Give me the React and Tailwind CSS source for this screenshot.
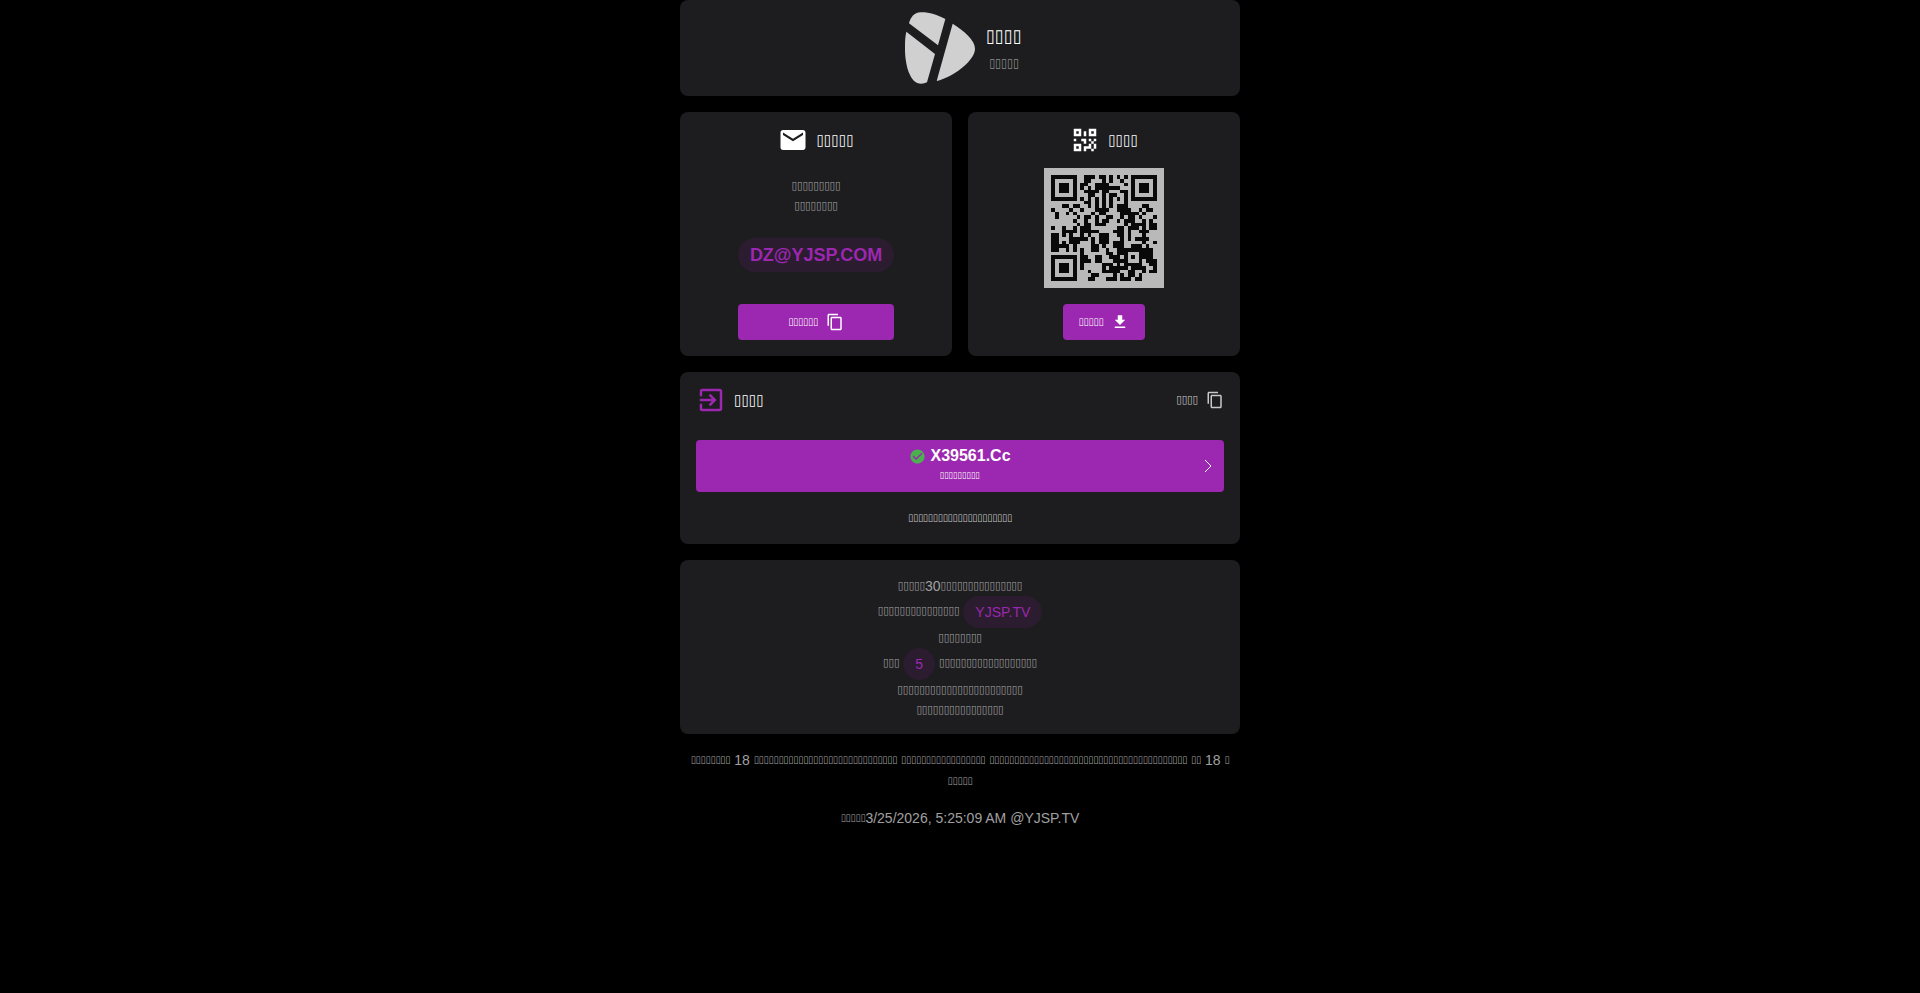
import React from 'react';
import { MdEmail, MdContentCopy, MdFileDownload, MdExitToApp, MdCheckCircle } from 'react-icons/md';

const boxSizes = {
    xs: 'text-[9px]',
    sm: 'text-[10px]',
    md: 'text-[11px]',
    lg: 'text-xs',
    xl: 'text-[15px]',
    title: 'text-lg',
};

// A run of hollow placeholder characters
const Boxes = ({ count, size = 'md' }) => (
    <span className={`align-[2px] font-['DejaVu_Sans_Condensed','DejaVu_Sans',sans-serif] leading-none font-normal ${boxSizes[size]}`}>
        {'▯'.repeat(count)}
    </span>
);

const qrRows = [
    '11111110011101101010101111111',
    '10000010011000101001001000001',
    '10111010110011110000101011101',
    '10111010101011111110001011101',
    '10111010011110110001101011101',
    '10000010001100101100101000001',
    '11111110101010101010101111111',
    '00000000011010101000100000000',
    '00011011001010101011100001100',
    '10000100100011110011110010110',
    '01001010000101100001111101000',
    '01000001011010011001011010001',
    '00000010010010110010111001010',
    '00000001011011100000101111011',
    '10010010111000000011011101011',
    '00011110111110000111010011100',
    '11010100101001110011010001000',
    '11000111110101110001010111100',
    '11010111000101110111000001001',
    '11111010000110100111001110100',
    '11001010100110010011111111110',
    '00000000100000011011100011110',
    '11111110110011001110101011110',
    '10000010111011000111100010111',
    '10111010100000111010111110011',
    '10111010100000101111101111001',
    '10111010001000111110011001011',
    '10000010000110000101011010000',
    '11111110001100011101110110000',
];

const QrCode = () => (
    <svg viewBox="0 0 33 33" className="h-[120px] w-[120px] bg-[#b9b9b9]" shapeRendering="crispEdges" role="img" aria-label="QR">
        {qrRows.map((row, y) =>
            row.split('').map((cell, x) =>
                cell === '1' ? <rect key={`${x}-${y}`} x={x + 2} y={y + 2} width="1" height="1" fill="#090909" /> : null
            )
        )}
    </svg>
);

const QrIcon = ({ className }) => (
    <svg viewBox="0 0 24 24" fill="currentColor" className={className}>
        <path d="M3,11H5V13H3V11M11,5H13V9H11V5M9,11H13V15H11V13H9V11M15,11H17V13H19V11H21V13H19V15H21V19H19V21H17V19H13V21H11V17H15V15H17V13H15V11M19,19V15H17V19H19M15,3H21V9H15V3M17,5V7H19V5H17M3,3H9V9H3V3M5,5V7H7V5H5M3,15H9V21H3V15M5,17V19H7V17H5Z" />
    </svg>
);

const Logo = () => (
    <svg viewBox="24 24 240 240" className="h-20 w-20" fill="#d0d0d0">
        <path d="M57 70C62 52 72 37 92 37C115 36 141 44 166 57L144 136Z" />
        <path d="M49 95L135 162L111 247C101 252 89 252 80 248C57 235 44 190 45 140C45 120 46 108 49 95Z" />
        <path d="M188 71C222 92 255 120 255 146C255 178 200 226 140 243Z" />
    </svg>
);

const Chip = ({ children }) => (
    <span className="inline-flex h-8 items-center rounded-full bg-[#2b1c2f] px-3 align-middle text-[#9c27b0]">
        {children}
    </span>
);

const App = () => {
    return (
        <div className="min-h-screen bg-black font-['Liberation_Sans',Arial,sans-serif] text-sm text-[#a0a0a1]">
            <main className="mx-auto flex max-w-[560px] flex-col gap-4">
                <header className="flex items-center justify-center gap-2 rounded-lg bg-[#1d1d1f] p-2">
                    <Logo />
                    <div className="text-center">
                        <h1 className="text-2xl text-white"><Boxes count={4} size="title" /></h1>
                        <p className="text-base text-[#8e8e8f]"><Boxes count={5} size="lg" /></p>
                    </div>
                </header>

                <div className="grid grid-cols-2 gap-4">
                    {/* Email */}
                    <section className="flex flex-col items-center rounded-lg bg-[#1d1d1f] px-4 pt-3 pb-4">
                        <div className="flex h-8 items-center gap-2 text-white">
                            <MdEmail className="h-[30px] w-[30px]" />
                            <h2 className="text-xl"><Boxes count={5} size="xl" /></h2>
                        </div>
                        <p className="mt-5 text-center">
                            <Boxes count={9} />
                            <br />
                            <Boxes count={8} />
                        </p>
                        <div className="mt-auto flex flex-col gap-8">
                            <span className="flex h-[34px] items-center rounded-full bg-[#2b1c2f] px-3 text-lg font-bold text-[#9c27b0]">
                                DZ@YJSP.COM
                            </span>
                            <button type="button" className="flex h-9 items-center justify-center gap-2 rounded bg-[#9c27b0] text-white">
                                <span><Boxes count={6} size="sm" /></span>
                                <MdContentCopy className="h-[18px] w-[18px]" />
                            </button>
                        </div>
                    </section>

                    {/* QR code */}
                    <section className="flex flex-col items-center rounded-lg bg-[#1d1d1f] px-4 pt-3 pb-4">
                        <div className="flex h-8 items-center gap-2 text-white">
                            <QrIcon className="h-[30px] w-[30px]" />
                            <h2 className="text-xl"><Boxes count={4} size="xl" /></h2>
                        </div>
                        <div className="mt-3">
                            <QrCode />
                        </div>
                        <button type="button" className="mt-4 flex h-9 items-center gap-2 rounded bg-[#9c27b0] px-4 text-white">
                            <span><Boxes count={5} size="sm" /></span>
                            <MdFileDownload className="h-[18px] w-[18px]" />
                        </button>
                    </section>
                </div>

                {/* Links */}
                <section className="rounded-lg bg-[#1d1d1f] px-4 pt-3 pb-4">
                    <div className="flex h-8 items-center justify-between">
                        <div className="flex items-center gap-2">
                            <MdExitToApp className="h-[30px] w-[30px] text-[#9c27b0]" />
                            <h2 className="text-xl text-white"><Boxes count={4} size="xl" /></h2>
                        </div>
                        <button type="button" className="flex items-center gap-2 text-[#c8c8c8]">
                            <span><Boxes count={4} /></span>
                            <MdContentCopy className="h-[18px] w-[18px]" />
                        </button>
                    </div>
                    <a href="#" className="mt-6 grid h-[52px] grid-cols-[1fr_auto_1fr] items-center rounded bg-[#9c27b0] px-2 text-white">
                        <span className="col-start-2 flex flex-col items-center pb-1">
                            <span className="flex items-center gap-1 text-base font-bold">
                                <MdCheckCircle className="h-[17px] w-[17px] text-[#4caf50]" />
                                X39561.Cc
                            </span>
                            <span className="text-xs"><Boxes count={9} size="xs" /></span>
                        </span>
                        <svg viewBox="0 0 16 16" className="h-4 w-4 justify-self-end" fill="none" stroke="currentColor">
                            <path d="M5 2L11 8L5 14" />
                        </svg>
                    </a>
                    <p className="mt-4 text-center text-[#c8c8c8]"><Boxes count={21} size="sm" /></p>
                </section>

                {/* Notes */}
                <section className="rounded-lg bg-[#1d1d1f] px-4 pt-4 pb-[14px] text-center">
                    <p><Boxes count={5} />30<Boxes count={15} /></p>
                    <p><Boxes count={15} /> <Chip>YJSP.TV</Chip></p>
                    <p><Boxes count={8} /></p>
                    <p><Boxes count={3} /> <Chip>5</Chip> <Boxes count={18} /></p>
                    <p><Boxes count={23} /></p>
                    <p><Boxes count={16} /></p>
                </section>

                <footer className="space-y-4 text-center leading-[21px]">
                    <p>
                        <Boxes count={8} size="sm" /> 18 <Boxes count={29} size="sm" /> <Boxes count={17} size="sm" />{' '}
                        <Boxes count={40} size="sm" /> <Boxes count={2} size="sm" /> 18 <Boxes count={1} size="sm" />
                        <br />
                        <Boxes count={5} size="sm" />
                    </p>
                    <p><Boxes count={5} size="sm" />3/25/2026, 5:25:09 AM @YJSP.TV</p>
                </footer>
            </main>
        </div>
    );
};

export default App;
